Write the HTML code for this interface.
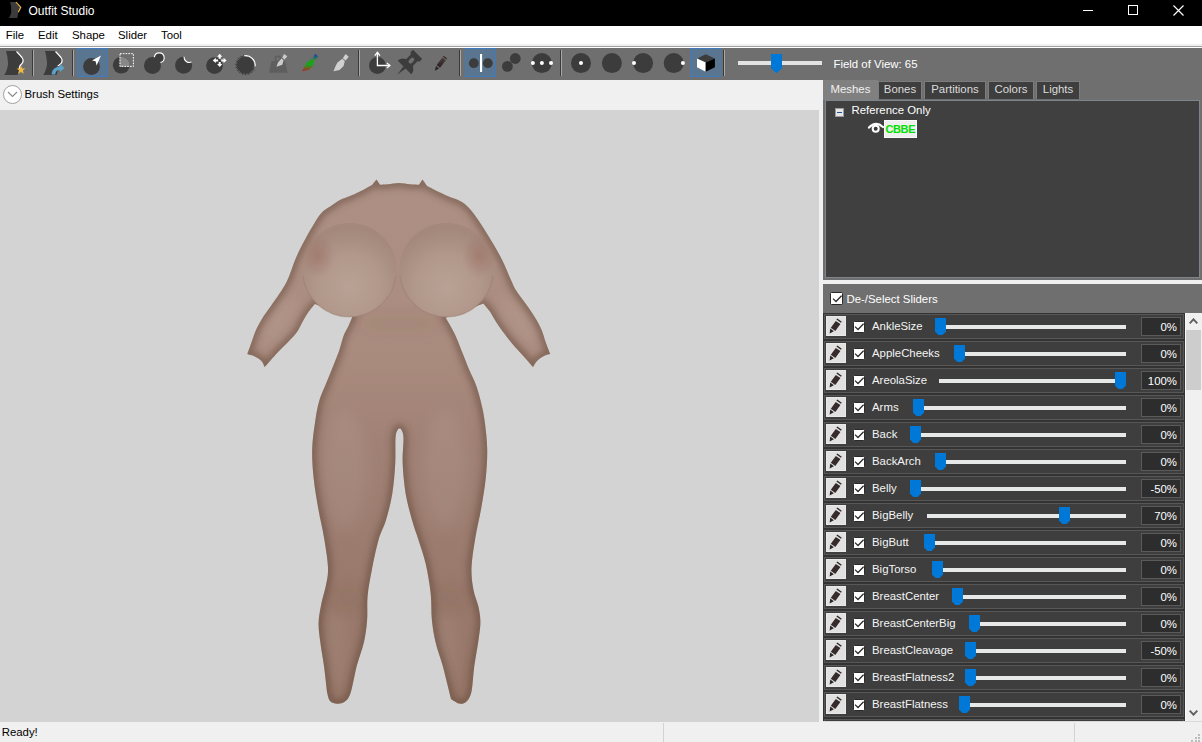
<!DOCTYPE html><html><head><meta charset="utf-8"><style>
*{margin:0;padding:0;box-sizing:border-box}
html,body{width:1202px;height:742px;overflow:hidden;background:#f0f0f0;font-family:"Liberation Sans",sans-serif;font-size:11.4px;color:#000}
.a{position:absolute}
#title{left:0;top:0;width:1202px;height:26px;background:#000;color:#fff}
#menu{left:0;top:26px;width:1202px;height:20px;background:#fff}
#menu span{position:absolute;top:3.2px}
#tb{left:0;top:48px;width:1202px;height:32px;background:#6f6f6f}
.sep{position:absolute;top:50px;width:2px;height:27px;background:#4a4a4a;border-right:1px solid #8a8a8a}
.sel{position:absolute;top:48px;height:29px;background:#5a7590;border:1px solid #3f7bbd}
#brush{left:0;top:80px;width:819px;height:30px;background:#f0f0f0}
#view{left:0;top:110px;width:819px;height:612px;background:#d3d3d3;overflow:hidden}
#rp{left:823px;top:80px;width:379px;height:200px;background:#6f6f6f}
.tab{position:absolute;top:81px;height:18px;background:#3e3e3e;border:1px solid #7c7c7c;border-bottom:none;color:#dcdcdc;padding-top:1.4px;text-align:center}
#tree{left:825px;top:100px;width:375px;height:178px;background:#404040;border:1px solid #7d848c}
#hdr{left:823px;top:284px;width:379px;height:29px;background:#6f6f6f;color:#fff}
#list{left:823px;top:313px;width:362px;height:408px;background:#333;overflow:hidden}
.row{position:absolute;left:1px;width:360px;height:25px;background:#3e3e3e;border:1px solid #575757}
.pen{position:absolute;left:1px;top:1px;width:20px;height:20px;background:#e1e1e1;border:1px solid #e9e9e9}
.cb{position:absolute;width:12px;height:12px;background:#fff;border:1px solid #2a2a2a;border-radius:1.5px}
.lbl{position:absolute;top:4.6px;color:#f4f4f4;white-space:nowrap}
.trk{position:absolute;top:10px;height:4px;background:#e7e8e8}
.thm{position:absolute;top:3px;width:11px;height:17px}
.val{position:absolute;left:316px;top:2px;width:40px;height:19px;background:#2d2d2d;border:1px solid #5a5a5a;color:#fff;text-align:right;padding-right:3px;padding-top:2.7px}
#sb{left:1185px;top:313px;width:17px;height:408px;background:#f0f0f0}
#status{left:0;top:722px;width:1202px;height:20px;background:#f0f0f0}
</style></head><body>
<div id="title" class="a">
<svg class="a" style="left:0;top:0" width="26" height="26" viewBox="0 0 26 26"><path d="M10.2 2 H16 L20.8 7.3 L18.3 12.3 L17.3 18 H9 Q10.6 15.6 11.2 12.5 Q11.5 7 10.2 2Z" fill="#3c3c3c"/><path d="M16 2 L20.8 7.3 L18.3 12.3" fill="none" stroke="#f0b840" stroke-width="1.1"/></svg>
<span class="a" style="left:28.5px;top:4.1px;font-size:12px">Outfit Studio</span>
<div class="a" style="left:1083px;top:10px;width:10px;height:1px;background:#fff"></div>
<div class="a" style="left:1128px;top:5px;width:10px;height:10px;border:1px solid #fff"></div>
<svg class="a" style="left:1173px;top:5px" width="11" height="11" viewBox="0 0 11 11"><path d="M0.5 0.5 L10.5 10.5 M10.5 0.5 L0.5 10.5" stroke="#fff" stroke-width="1.15"/></svg>
</div>
<div id="menu" class="a">
<span style="left:5.7px">File</span>
<span style="left:38px">Edit</span>
<span style="left:72px">Shape</span>
<span style="left:118px">Slider</span>
<span style="left:161px">Tool</span>
</div>
<div class="a" style="left:0;top:44px;width:1202px;height:2px;background:#f0f0f0"></div>
<div class="a" style="left:0;top:46px;width:1202px;height:1px;background:#a0a0a0"></div>
<div class="a" style="left:0;top:47px;width:1202px;height:1px;background:#fff"></div>
<div id="tb" class="a"></div>
<div class="sel" style="left:77px;width:31px"></div>
<div class="sel" style="left:465px;width:31px"></div>
<div class="sel" style="left:690px;width:31px"></div>
<svg class="a" style="left:0;top:0" width="1202" height="80" viewBox="0 0 1202 80">
<defs>
<linearGradient id="cg" x1="0" y1="0" x2="0" y2="1"><stop offset="0" stop-color="#2030c0"/><stop offset="0.4" stop-color="#20a020"/><stop offset="0.65" stop-color="#20a020"/><stop offset="1" stop-color="#c02020"/></linearGradient>
<linearGradient id="pg" x1="0" y1="0" x2="0" y2="1"><stop offset="0" stop-color="#4a4040"/><stop offset="1" stop-color="#2a1c1c"/></linearGradient>
</defs>
<!-- separators -->
<g fill="#3a3a3a"><rect x="32" y="50" width="1" height="26"/><rect x="72" y="50" width="1" height="26"/><rect x="358" y="50" width="1" height="26"/><rect x="459" y="50" width="1" height="26"/><rect x="560" y="50" width="1" height="26"/><rect x="723" y="50" width="1" height="26"/></g>
<g fill="#a8a8a8"><rect x="33" y="50" width="1" height="26"/><rect x="73" y="50" width="1" height="26"/><rect x="359" y="50" width="1" height="26"/><rect x="460" y="50" width="1" height="26"/><rect x="561" y="50" width="1" height="26"/><rect x="724" y="50" width="1" height="26"/></g>
<!-- icon1 silhouette -->
<path d="M6 51 H16.5 Q19 54 22 57.5 Q24.5 61 21.5 64 Q19 66 19.5 69 L17.5 75 H4.3 Q8.5 68 8 62 Q7.6 56 6 51Z" fill="#3c3c3c"/>
<path d="M16.5 51.5 Q19 54 22 57.5 Q24.5 61 21.5 64 Q19 66 19.5 69" fill="none" stroke="#fff" stroke-width="1.2"/>
<path d="M21 65.4 L22.2 68.5 L25.4 68.6 L22.9 70.6 L23.8 73.8 L21 72 L18.2 73.8 L19.1 70.6 L16.6 68.6 L19.8 68.5Z" fill="#f0b840"/>
<!-- icon2 -->
<path d="M45 51 H55.5 Q58 54 61 57.5 Q63.5 61 60.5 64 Q58 66 58.5 69 L56.5 75 H43.3 Q47.5 68 47 62 Q46.6 56 45 51Z" fill="#3c3c3c"/>
<path d="M55.5 51.5 Q58 54 61 57.5 Q63.5 61 60.5 64 Q58 66 57.5 66" fill="none" stroke="#fff" stroke-width="1.2"/>
<path d="M51.5 74.5 Q52 67 60 66.5 L60 64 L64.6 68 L60 72 L60 69.7 Q55.5 70 55.3 74.5Z" fill="#5ba3c9"/>
<!-- selected: sphere + arrow -->
<circle cx="91.5" cy="66.5" r="8.4" fill="#3c3c3c"/>
<path d="M101 55.6 L92 60.4 L95.6 61.2 L96.6 65.6Z" fill="#fff"/>
<!-- select -->
<circle cx="121.3" cy="65.2" r="8.4" fill="#3c3c3c"/>
<path d="M119.6 57 A8.4 8.4 0 0 1 129.7 65.2 L129.7 66.8 L119.6 66.8Z" fill="#888"/>
<rect x="120" y="53.6" width="13.4" height="12.8" fill="none" stroke="#fff" stroke-width="1" stroke-dasharray="1.6 1.2"/>
<!-- inflate -->
<circle cx="159.3" cy="57.7" r="4.9" fill="#3c3c3c"/>
<circle cx="152.5" cy="65.6" r="8.5" fill="#3c3c3c"/>
<path d="M154.4 57.3 A4.9 4.9 0 1 1 160.4 62.5" fill="none" stroke="#fff" stroke-width="1.1"/>
<!-- deflate -->
<circle cx="183.6" cy="65.2" r="8.5" fill="#3c3c3c"/>
<circle cx="189.5" cy="57" r="5.5" fill="#6f6f6f"/>
<path d="M184 56.7 A5.5 5.5 0 0 0 191.5 62.1" fill="none" stroke="#fff" stroke-width="1.1"/>
<!-- move -->
<circle cx="214.5" cy="65.6" r="8.4" fill="#3c3c3c"/>
<g fill="#fff"><path d="M219.7 53.8 L222.29999999999998 56.8 H220.7 V58.8 H218.7 V56.8 H217.1Z"/><path d="M219.7 67.0 L222.29999999999998 64.0 H220.7 V62.0 H218.7 V64.0 H217.1Z"/><path d="M212.79999999999998 60.4 L215.79999999999998 63.0 V61.4 H218.1 V59.4 H215.79999999999998 V57.8Z"/><path d="M226.6 60.4 L223.6 63.0 V61.4 H221.29999999999998 V59.4 H223.6 V57.8Z"/></g>
<!-- smooth spiky -->
<circle cx="245.5" cy="65" r="8.6" fill="#3c3c3c"/>
<path d="M244.2 57.6 L243.7 54.9 M243.0 57.9 L242.3 56.0 M241.9 58.4 L240.5 56.0 M240.8 59.1 L239.5 57.5 M239.9 60.0 L237.8 58.1 M239.2 61.0 L237.4 59.8 M238.6 62.1 L236.0 61.0 M238.2 63.2 L236.2 62.8 M238.0 64.5 L235.2 64.3 M238.0 65.7 L235.9 65.9 M238.3 66.9 L235.6 67.7 M238.7 68.1 L236.8 69.0 M239.3 69.2 L237.0 70.8 M240.1 70.2 L238.5 71.6 M241.0 71.0 L239.3 73.2 M242.0 71.7 L241.1 73.5 M243.2 72.1 L242.3 74.8 M244.4 72.4 L244.1 74.5 M245.6 72.5 L245.7 75.3 M246.9 72.4 L247.2 74.4 M248.1 72.0 L249.0 74.7 M249.2 71.5 L250.2 73.4 M250.2 70.8 L252.0 73.0 M251.1 70.0 L252.7 71.4 M251.9 69.0 L254.2 70.5 M252.4 67.9 L254.4 68.7" stroke="#3c3c3c" stroke-width="1"/>
<path d="M244.2 55.8 A9.6 9.6 0 0 1 255.2 66.2" fill="none" stroke="#fff" stroke-width="1.1"/>
<!-- weight (disabled) -->
<path d="M271.5 61 H285 L287.5 72.7 H269Z" fill="#5e5e5e"/>
<circle cx="277.8" cy="58.8" r="2.6" fill="none" stroke="#5e5e5e" stroke-width="1.4"/>
<path d="M284 54 L287.3 56.3 L284.6 59.6 L282.3 57.8Z" fill="#cdcdcd"/>
<path d="M281.5 58.5 L283.5 60.2 L282.4 64.8 L276.4 66.8 L278 62.5Z" fill="#cdcdcd"/>
<!-- color brush -->
<path d="M315.2 53.8 L318.2 56.4 L315.5 60 L312.6 58Z M312 58.5 L314.5 60.6 L313.3 65.8 L309 69.8 L302 71.2 L304.5 66.5 L306.5 62.6Z" fill="url(#cg)"/>
<!-- gray brush -->
<path d="M345.6 54 L348.7 56.8 L345.7 60.5 L342.8 58.3Z M342.2 58.8 L344.8 61 L343.6 66 L339.5 70 L333.5 71.2 L335.4 66.5 L337.3 62.8Z" fill="#d0d0d0"/>
<!-- transform -->
<circle cx="377.4" cy="65.5" r="8.4" fill="#3c3c3c"/>
<path d="M377.4 52.8 V65.5 H389.5" fill="none" stroke="#fff" stroke-width="1.3"/>
<path d="M374.8 55.6 L377.4 52.3 L380 55.6 M386.8 62.9 L390 65.5 L386.8 68.1" fill="none" stroke="#fff" stroke-width="1.2"/>
<!-- pin -->
<g transform="translate(407 65) rotate(45)">
<path d="M-6.5 -15 H6.5 V-11.5 L4.8 -10 V-3.5 Q9.5 -1 9.5 3.5 H-9.5 Q-9.5 -1 -4.8 -3.5 V-10 L-6.5 -11.5Z" fill="#3c3c3c"/>
<path d="M-1.6 3.4 L0 13.5 L1.6 3.4Z" fill="#3c3c3c"/>
<rect x="-2" y="-9.5" width="4" height="6.5" rx="2" fill="#6f6f6f"/>
</g>
<!-- pencil -->
<path d="M443.8 55.7 L447.2 58.4 L446.3 59.5 L442.9 56.8Z" fill="#3a2828"/>
<path d="M442.4 57.6 L445.8 60.3 L440 67.8 L436.6 65.1Z" fill="url(#pg)"/>
<path d="M436 66 L439 68.4 L434.8 70.8Z" fill="#2a2020"/>
<!-- mirror -->
<circle cx="473.8" cy="63.2" r="4.9" fill="#3c3c3c"/>
<circle cx="487.8" cy="63.2" r="4.9" fill="#3c3c3c"/>
<rect x="480" y="54" width="2.1" height="18" fill="#fff"/>
<!-- two circles -->
<circle cx="515.3" cy="58.5" r="5.4" fill="#3c3c3c"/>
<circle cx="507.4" cy="66.4" r="5.4" fill="#3c3c3c"/>
<!-- 3 dots -->
<circle cx="541.9" cy="63.1" r="10" fill="#3c3c3c"/>
<g fill="#fff"><circle cx="532.9" cy="63.1" r="2"/><circle cx="541.9" cy="63.1" r="2"/><circle cx="551" cy="63.1" r="2"/></g>
<circle cx="581" cy="63.1" r="10" fill="#3c3c3c"/><circle cx="581" cy="63.1" r="2" fill="#fff"/>
<circle cx="611.9" cy="63.1" r="10" fill="#3c3c3c"/>
<circle cx="643.1" cy="63.1" r="10" fill="#3c3c3c"/><circle cx="634" cy="63.1" r="2" fill="#fff"/>
<circle cx="673.7" cy="63.1" r="10" fill="#3c3c3c"/><circle cx="682.9" cy="63.1" r="2" fill="#fff"/>
<!-- cube -->
<path d="M705.7 54.3 L714.9 58.5 L705.7 62.6 L697 58.5Z" fill="#3c3c3c"/>
<path d="M697 58.5 L705.7 62.6 V71.8 L697 67.2Z" fill="#fff"/>
<path d="M714.9 58.5 L705.7 62.6 V71.8 L714.9 67.2Z" fill="#000"/>
<!-- fov slider -->
<rect x="738" y="61" width="84" height="4" fill="#e3e3e3"/>
<path d="M771 54 H782 V68.3 L776.5 73.2 L771 68.3Z" fill="#0078d7"/>
</svg>
<span class="a" style="left:833.5px;top:57.6px;color:#fff">Field of View: 65</span>

<div id="brush" class="a">
<div class="a" style="left:3px;top:5px;width:19px;height:19px;border:1px solid #a0a0a0;border-radius:50%;background:#fff"></div>
<svg class="a" style="left:7px;top:11px" width="11" height="7" viewBox="0 0 11 7"><path d="M1 1 L5.5 5.5 L10 1" fill="none" stroke="#8a8a8a" stroke-width="1.1"/></svg>
<span class="a" style="left:24.5px;top:8.3px">Brush Settings</span>
</div>
<div id="view" class="a"><svg class="a" style="left:0;top:0" width="819" height="612" viewBox="0 110 819 612">
<defs>
<linearGradient id="skin" x1="0" y1="180" x2="0" y2="705" gradientUnits="userSpaceOnUse">
<stop offset="0" stop-color="#ad9084"/>
<stop offset="0.3" stop-color="#ab8d80"/>
<stop offset="0.5" stop-color="#a18175"/>
<stop offset="0.75" stop-color="#9a7a6d"/>
<stop offset="1" stop-color="#967667"/>
</linearGradient>
<radialGradient id="br" cx="0.5" cy="0.68" r="0.62">
<stop offset="0" stop-color="#b9a195"/>
<stop offset="0.55" stop-color="#b1988b"/>
<stop offset="1" stop-color="#a3887b"/>
</radialGradient>
<radialGradient id="ar" cx="0.5" cy="0.5" r="0.5">
<stop offset="0" stop-color="#9a6a5e" stop-opacity="0.5"/>
<stop offset="1" stop-color="#9a6a5e" stop-opacity="0"/>
</radialGradient>
<clipPath id="bc"><path d="M372.0 185.0 L376.5 179.5 L380.0 184.8 C381.3 184.7 384.8 184.6 388.0 184.3 C391.2 184.0 395.3 183.0 399.0 183.0 C402.7 183.0 406.7 184.0 410.0 184.3 C413.3 184.6 417.5 184.7 419.0 184.8 L422.5 179.5 L427.0 186.0 C429.2 187.1 436.2 190.7 440.0 192.5 C443.8 194.3 446.7 195.6 450.0 197.0 C453.3 198.4 456.8 199.2 460.0 201.0 C463.2 202.8 465.8 204.5 469.0 208.0 C472.2 211.5 475.6 216.2 479.4 221.8 C483.2 227.4 487.8 234.8 491.6 241.3 C495.5 247.8 499.3 254.2 502.5 260.7 C505.7 267.2 508.8 275.2 511.0 280.1 C513.2 285.0 513.6 286.4 515.8 290.0 C518.0 293.6 521.3 297.6 524.4 301.9 C527.5 306.2 531.2 311.2 534.1 315.9 C537.0 320.6 539.7 325.5 541.6 329.9 C543.5 334.3 544.3 338.5 545.8 342.5 C547.2 346.5 549.5 352.2 550.3 354.1 C549.1 354.5 545.2 355.2 543.0 356.4 C540.8 357.5 538.7 359.2 537.0 361.0 C535.3 362.8 533.7 366.1 533.0 367.1 C531.2 365.0 525.6 358.6 522.2 354.7 C518.8 350.8 515.5 347.5 512.5 343.9 C509.4 340.3 506.6 336.7 503.9 333.1 C501.2 329.5 498.6 325.9 496.3 322.3 C494.0 318.7 492.0 314.7 489.9 311.6 C487.8 308.5 484.5 304.9 483.4 303.5 L445.7 317.8 C446.6 319.4 449.6 324.3 451.3 327.5 C453.1 330.7 454.3 332.9 456.2 337.2 C458.1 341.5 460.5 348.0 462.7 353.4 C464.9 358.8 467.0 364.5 469.1 369.6 C471.2 374.7 473.7 379.0 475.6 384.1 C477.5 389.2 479.0 394.3 480.5 400.3 C482.0 406.3 483.4 411.9 484.5 420.0 C485.6 428.1 487.0 439.2 487.2 449.0 C487.4 458.8 486.7 468.7 485.7 478.6 C484.7 488.5 482.9 498.3 481.2 508.2 C479.5 518.1 476.9 528.0 475.3 537.9 C473.7 547.8 471.8 558.8 471.5 567.5 C471.2 576.2 472.3 583.4 473.5 590.0 C474.7 596.6 477.4 601.7 478.5 607.0 C479.6 612.3 480.4 616.5 480.4 622.0 C480.4 627.5 479.5 632.6 478.5 640.0 C477.5 647.4 475.5 657.4 474.3 666.1 C473.1 674.8 472.8 686.0 471.4 692.0 C470.0 698.0 468.1 700.1 466.0 702.0 C463.9 703.9 461.5 704.0 459.0 703.5 C456.5 703.0 452.3 699.8 451.0 699.0 C449.6 693.5 445.4 675.6 442.8 666.1 C440.2 656.6 437.3 649.6 435.5 641.9 C433.7 634.2 432.7 628.1 431.9 620.0 C431.1 611.9 431.7 602.7 430.7 593.4 C429.7 584.1 427.8 573.2 425.8 564.3 C423.8 555.4 420.8 547.4 418.5 540.0 C416.2 532.6 414.1 527.8 412.0 520.0 C409.9 512.2 407.2 502.8 405.6 493.4 C404.1 484.0 403.1 473.0 402.7 463.8 C402.3 454.6 403.7 443.6 403.5 438.0 C403.3 432.4 402.2 431.6 401.5 430.0 C400.8 428.4 400.2 428.5 399.5 428.5 C398.8 428.5 398.2 428.4 397.5 430.0 C396.8 431.6 395.9 432.4 395.5 438.0 C395.1 443.6 395.7 454.6 395.2 463.8 C394.7 473.0 393.8 484.0 392.3 493.4 C390.8 502.8 388.3 512.2 386.0 520.0 C383.7 527.8 380.8 531.8 378.5 540.0 C376.2 548.2 373.8 559.8 372.0 569.1 C370.2 578.4 368.4 587.3 367.6 595.8 C366.8 604.3 367.7 612.3 367.1 620.0 C366.5 627.7 365.7 634.2 364.0 641.9 C362.3 649.6 358.9 657.6 356.7 666.1 C354.5 674.6 352.6 686.9 350.6 692.8 C348.7 698.7 347.2 699.7 345.0 701.5 C342.8 703.3 339.8 703.8 337.3 703.7 C334.8 703.6 331.7 703.0 330.0 701.0 C328.3 699.0 327.5 693.5 327.0 692.0 C326.5 687.7 325.1 674.5 324.0 666.1 C322.9 657.8 321.2 649.2 320.3 641.9 C319.4 634.6 318.4 629.0 318.6 622.5 C318.8 616.0 320.3 609.2 321.5 603.0 C322.7 596.8 324.9 590.9 326.0 585.0 C327.1 579.1 328.3 575.4 328.0 567.5 C327.7 559.6 325.7 547.8 324.1 537.9 C322.5 528.0 319.9 518.1 318.2 508.2 C316.5 498.3 314.7 488.5 313.7 478.6 C312.7 468.7 311.9 458.8 312.2 449.0 C312.5 439.2 314.2 428.1 315.4 420.0 C316.6 411.9 317.6 406.3 319.4 400.3 C321.1 394.3 323.7 389.5 325.9 384.1 C328.1 378.7 330.2 373.4 332.4 368.0 C334.5 362.6 336.9 357.2 338.8 351.8 C340.7 346.4 342.1 339.9 343.7 335.6 C345.3 331.3 347.0 329.1 348.5 325.9 C350.0 322.7 351.9 317.8 352.6 316.2 L314.8 304.0 C313.8 305.3 310.7 308.9 308.8 311.6 C306.9 314.3 305.4 316.8 303.4 320.2 C301.4 323.6 299.5 328.4 297.0 332.0 C294.5 335.6 291.5 338.4 288.3 341.8 C285.1 345.2 281.6 348.3 277.6 352.5 C273.7 356.7 266.8 364.7 264.6 367.1 C264.1 366.1 263.1 362.8 261.5 361.0 C259.9 359.2 257.2 357.6 254.8 356.5 C252.4 355.4 248.6 354.5 247.3 354.1 C248.1 352.0 250.4 345.5 251.8 341.5 C253.2 337.5 254.2 333.8 256.0 329.9 C257.8 326.0 260.2 321.8 262.5 318.0 C264.8 314.2 266.8 312.0 270.0 307.3 C273.2 302.6 278.8 294.9 281.9 290.0 C285.0 285.1 286.2 283.0 288.5 277.7 C290.8 272.4 293.0 264.8 295.8 258.3 C298.6 251.8 301.4 246.1 305.5 238.8 C309.6 231.5 315.9 220.1 320.1 214.6 C324.4 209.1 327.7 208.4 331.0 206.0 C334.3 203.6 336.8 201.7 340.0 200.0 C343.2 198.3 346.7 197.4 350.0 196.0 C353.3 194.6 356.3 193.3 360.0 191.5 C363.7 189.7 370.0 186.1 372.0 185.0Z"/></clipPath>
<filter id="bl" x="-20%" y="-20%" width="140%" height="140%"><feGaussianBlur stdDeviation="3"/></filter>
<filter id="bl2" x="-50%" y="-50%" width="200%" height="200%"><feGaussianBlur stdDeviation="8"/></filter>
</defs>
<path d="M372.0 185.0 L376.5 179.5 L380.0 184.8 C381.3 184.7 384.8 184.6 388.0 184.3 C391.2 184.0 395.3 183.0 399.0 183.0 C402.7 183.0 406.7 184.0 410.0 184.3 C413.3 184.6 417.5 184.7 419.0 184.8 L422.5 179.5 L427.0 186.0 C429.2 187.1 436.2 190.7 440.0 192.5 C443.8 194.3 446.7 195.6 450.0 197.0 C453.3 198.4 456.8 199.2 460.0 201.0 C463.2 202.8 465.8 204.5 469.0 208.0 C472.2 211.5 475.6 216.2 479.4 221.8 C483.2 227.4 487.8 234.8 491.6 241.3 C495.5 247.8 499.3 254.2 502.5 260.7 C505.7 267.2 508.8 275.2 511.0 280.1 C513.2 285.0 513.6 286.4 515.8 290.0 C518.0 293.6 521.3 297.6 524.4 301.9 C527.5 306.2 531.2 311.2 534.1 315.9 C537.0 320.6 539.7 325.5 541.6 329.9 C543.5 334.3 544.3 338.5 545.8 342.5 C547.2 346.5 549.5 352.2 550.3 354.1 C549.1 354.5 545.2 355.2 543.0 356.4 C540.8 357.5 538.7 359.2 537.0 361.0 C535.3 362.8 533.7 366.1 533.0 367.1 C531.2 365.0 525.6 358.6 522.2 354.7 C518.8 350.8 515.5 347.5 512.5 343.9 C509.4 340.3 506.6 336.7 503.9 333.1 C501.2 329.5 498.6 325.9 496.3 322.3 C494.0 318.7 492.0 314.7 489.9 311.6 C487.8 308.5 484.5 304.9 483.4 303.5 L445.7 317.8 C446.6 319.4 449.6 324.3 451.3 327.5 C453.1 330.7 454.3 332.9 456.2 337.2 C458.1 341.5 460.5 348.0 462.7 353.4 C464.9 358.8 467.0 364.5 469.1 369.6 C471.2 374.7 473.7 379.0 475.6 384.1 C477.5 389.2 479.0 394.3 480.5 400.3 C482.0 406.3 483.4 411.9 484.5 420.0 C485.6 428.1 487.0 439.2 487.2 449.0 C487.4 458.8 486.7 468.7 485.7 478.6 C484.7 488.5 482.9 498.3 481.2 508.2 C479.5 518.1 476.9 528.0 475.3 537.9 C473.7 547.8 471.8 558.8 471.5 567.5 C471.2 576.2 472.3 583.4 473.5 590.0 C474.7 596.6 477.4 601.7 478.5 607.0 C479.6 612.3 480.4 616.5 480.4 622.0 C480.4 627.5 479.5 632.6 478.5 640.0 C477.5 647.4 475.5 657.4 474.3 666.1 C473.1 674.8 472.8 686.0 471.4 692.0 C470.0 698.0 468.1 700.1 466.0 702.0 C463.9 703.9 461.5 704.0 459.0 703.5 C456.5 703.0 452.3 699.8 451.0 699.0 C449.6 693.5 445.4 675.6 442.8 666.1 C440.2 656.6 437.3 649.6 435.5 641.9 C433.7 634.2 432.7 628.1 431.9 620.0 C431.1 611.9 431.7 602.7 430.7 593.4 C429.7 584.1 427.8 573.2 425.8 564.3 C423.8 555.4 420.8 547.4 418.5 540.0 C416.2 532.6 414.1 527.8 412.0 520.0 C409.9 512.2 407.2 502.8 405.6 493.4 C404.1 484.0 403.1 473.0 402.7 463.8 C402.3 454.6 403.7 443.6 403.5 438.0 C403.3 432.4 402.2 431.6 401.5 430.0 C400.8 428.4 400.2 428.5 399.5 428.5 C398.8 428.5 398.2 428.4 397.5 430.0 C396.8 431.6 395.9 432.4 395.5 438.0 C395.1 443.6 395.7 454.6 395.2 463.8 C394.7 473.0 393.8 484.0 392.3 493.4 C390.8 502.8 388.3 512.2 386.0 520.0 C383.7 527.8 380.8 531.8 378.5 540.0 C376.2 548.2 373.8 559.8 372.0 569.1 C370.2 578.4 368.4 587.3 367.6 595.8 C366.8 604.3 367.7 612.3 367.1 620.0 C366.5 627.7 365.7 634.2 364.0 641.9 C362.3 649.6 358.9 657.6 356.7 666.1 C354.5 674.6 352.6 686.9 350.6 692.8 C348.7 698.7 347.2 699.7 345.0 701.5 C342.8 703.3 339.8 703.8 337.3 703.7 C334.8 703.6 331.7 703.0 330.0 701.0 C328.3 699.0 327.5 693.5 327.0 692.0 C326.5 687.7 325.1 674.5 324.0 666.1 C322.9 657.8 321.2 649.2 320.3 641.9 C319.4 634.6 318.4 629.0 318.6 622.5 C318.8 616.0 320.3 609.2 321.5 603.0 C322.7 596.8 324.9 590.9 326.0 585.0 C327.1 579.1 328.3 575.4 328.0 567.5 C327.7 559.6 325.7 547.8 324.1 537.9 C322.5 528.0 319.9 518.1 318.2 508.2 C316.5 498.3 314.7 488.5 313.7 478.6 C312.7 468.7 311.9 458.8 312.2 449.0 C312.5 439.2 314.2 428.1 315.4 420.0 C316.6 411.9 317.6 406.3 319.4 400.3 C321.1 394.3 323.7 389.5 325.9 384.1 C328.1 378.7 330.2 373.4 332.4 368.0 C334.5 362.6 336.9 357.2 338.8 351.8 C340.7 346.4 342.1 339.9 343.7 335.6 C345.3 331.3 347.0 329.1 348.5 325.9 C350.0 322.7 351.9 317.8 352.6 316.2 L314.8 304.0 C313.8 305.3 310.7 308.9 308.8 311.6 C306.9 314.3 305.4 316.8 303.4 320.2 C301.4 323.6 299.5 328.4 297.0 332.0 C294.5 335.6 291.5 338.4 288.3 341.8 C285.1 345.2 281.6 348.3 277.6 352.5 C273.7 356.7 266.8 364.7 264.6 367.1 C264.1 366.1 263.1 362.8 261.5 361.0 C259.9 359.2 257.2 357.6 254.8 356.5 C252.4 355.4 248.6 354.5 247.3 354.1 C248.1 352.0 250.4 345.5 251.8 341.5 C253.2 337.5 254.2 333.8 256.0 329.9 C257.8 326.0 260.2 321.8 262.5 318.0 C264.8 314.2 266.8 312.0 270.0 307.3 C273.2 302.6 278.8 294.9 281.9 290.0 C285.0 285.1 286.2 283.0 288.5 277.7 C290.8 272.4 293.0 264.8 295.8 258.3 C298.6 251.8 301.4 246.1 305.5 238.8 C309.6 231.5 315.9 220.1 320.1 214.6 C324.4 209.1 327.7 208.4 331.0 206.0 C334.3 203.6 336.8 201.7 340.0 200.0 C343.2 198.3 346.7 197.4 350.0 196.0 C353.3 194.6 356.3 193.3 360.0 191.5 C363.7 189.7 370.0 186.1 372.0 185.0Z" fill="url(#skin)"/>
<g clip-path="url(#bc)">
<g filter="url(#bl2)" fill="#fff" fill-opacity="0.07">
<ellipse cx="345" cy="470" rx="22" ry="60"/>
<ellipse cx="445" cy="470" rx="22" ry="60"/>

<ellipse cx="336" cy="650" rx="9" ry="40"/>
<ellipse cx="446" cy="650" rx="9" ry="40"/>
<ellipse cx="278" cy="320" rx="10" ry="30" transform="rotate(35 278 320)"/>
<ellipse cx="520" cy="320" rx="10" ry="30" transform="rotate(-35 520 320)"/>
</g>
<g filter="url(#bl2)" fill="#5a4036" fill-opacity="0.12">
<ellipse cx="348" cy="598" rx="16" ry="8"/>
<ellipse cx="450" cy="598" rx="16" ry="8"/>
<ellipse cx="399" cy="324" rx="45" ry="6"/>
</g>
<path d="M372.0 185.0 L376.5 179.5 L380.0 184.8 C381.3 184.7 384.8 184.6 388.0 184.3 C391.2 184.0 395.3 183.0 399.0 183.0 C402.7 183.0 406.7 184.0 410.0 184.3 C413.3 184.6 417.5 184.7 419.0 184.8 L422.5 179.5 L427.0 186.0 C429.2 187.1 436.2 190.7 440.0 192.5 C443.8 194.3 446.7 195.6 450.0 197.0 C453.3 198.4 456.8 199.2 460.0 201.0 C463.2 202.8 465.8 204.5 469.0 208.0 C472.2 211.5 475.6 216.2 479.4 221.8 C483.2 227.4 487.8 234.8 491.6 241.3 C495.5 247.8 499.3 254.2 502.5 260.7 C505.7 267.2 508.8 275.2 511.0 280.1 C513.2 285.0 513.6 286.4 515.8 290.0 C518.0 293.6 521.3 297.6 524.4 301.9 C527.5 306.2 531.2 311.2 534.1 315.9 C537.0 320.6 539.7 325.5 541.6 329.9 C543.5 334.3 544.3 338.5 545.8 342.5 C547.2 346.5 549.5 352.2 550.3 354.1 C549.1 354.5 545.2 355.2 543.0 356.4 C540.8 357.5 538.7 359.2 537.0 361.0 C535.3 362.8 533.7 366.1 533.0 367.1 C531.2 365.0 525.6 358.6 522.2 354.7 C518.8 350.8 515.5 347.5 512.5 343.9 C509.4 340.3 506.6 336.7 503.9 333.1 C501.2 329.5 498.6 325.9 496.3 322.3 C494.0 318.7 492.0 314.7 489.9 311.6 C487.8 308.5 484.5 304.9 483.4 303.5 L445.7 317.8 C446.6 319.4 449.6 324.3 451.3 327.5 C453.1 330.7 454.3 332.9 456.2 337.2 C458.1 341.5 460.5 348.0 462.7 353.4 C464.9 358.8 467.0 364.5 469.1 369.6 C471.2 374.7 473.7 379.0 475.6 384.1 C477.5 389.2 479.0 394.3 480.5 400.3 C482.0 406.3 483.4 411.9 484.5 420.0 C485.6 428.1 487.0 439.2 487.2 449.0 C487.4 458.8 486.7 468.7 485.7 478.6 C484.7 488.5 482.9 498.3 481.2 508.2 C479.5 518.1 476.9 528.0 475.3 537.9 C473.7 547.8 471.8 558.8 471.5 567.5 C471.2 576.2 472.3 583.4 473.5 590.0 C474.7 596.6 477.4 601.7 478.5 607.0 C479.6 612.3 480.4 616.5 480.4 622.0 C480.4 627.5 479.5 632.6 478.5 640.0 C477.5 647.4 475.5 657.4 474.3 666.1 C473.1 674.8 472.8 686.0 471.4 692.0 C470.0 698.0 468.1 700.1 466.0 702.0 C463.9 703.9 461.5 704.0 459.0 703.5 C456.5 703.0 452.3 699.8 451.0 699.0 C449.6 693.5 445.4 675.6 442.8 666.1 C440.2 656.6 437.3 649.6 435.5 641.9 C433.7 634.2 432.7 628.1 431.9 620.0 C431.1 611.9 431.7 602.7 430.7 593.4 C429.7 584.1 427.8 573.2 425.8 564.3 C423.8 555.4 420.8 547.4 418.5 540.0 C416.2 532.6 414.1 527.8 412.0 520.0 C409.9 512.2 407.2 502.8 405.6 493.4 C404.1 484.0 403.1 473.0 402.7 463.8 C402.3 454.6 403.7 443.6 403.5 438.0 C403.3 432.4 402.2 431.6 401.5 430.0 C400.8 428.4 400.2 428.5 399.5 428.5 C398.8 428.5 398.2 428.4 397.5 430.0 C396.8 431.6 395.9 432.4 395.5 438.0 C395.1 443.6 395.7 454.6 395.2 463.8 C394.7 473.0 393.8 484.0 392.3 493.4 C390.8 502.8 388.3 512.2 386.0 520.0 C383.7 527.8 380.8 531.8 378.5 540.0 C376.2 548.2 373.8 559.8 372.0 569.1 C370.2 578.4 368.4 587.3 367.6 595.8 C366.8 604.3 367.7 612.3 367.1 620.0 C366.5 627.7 365.7 634.2 364.0 641.9 C362.3 649.6 358.9 657.6 356.7 666.1 C354.5 674.6 352.6 686.9 350.6 692.8 C348.7 698.7 347.2 699.7 345.0 701.5 C342.8 703.3 339.8 703.8 337.3 703.7 C334.8 703.6 331.7 703.0 330.0 701.0 C328.3 699.0 327.5 693.5 327.0 692.0 C326.5 687.7 325.1 674.5 324.0 666.1 C322.9 657.8 321.2 649.2 320.3 641.9 C319.4 634.6 318.4 629.0 318.6 622.5 C318.8 616.0 320.3 609.2 321.5 603.0 C322.7 596.8 324.9 590.9 326.0 585.0 C327.1 579.1 328.3 575.4 328.0 567.5 C327.7 559.6 325.7 547.8 324.1 537.9 C322.5 528.0 319.9 518.1 318.2 508.2 C316.5 498.3 314.7 488.5 313.7 478.6 C312.7 468.7 311.9 458.8 312.2 449.0 C312.5 439.2 314.2 428.1 315.4 420.0 C316.6 411.9 317.6 406.3 319.4 400.3 C321.1 394.3 323.7 389.5 325.9 384.1 C328.1 378.7 330.2 373.4 332.4 368.0 C334.5 362.6 336.9 357.2 338.8 351.8 C340.7 346.4 342.1 339.9 343.7 335.6 C345.3 331.3 347.0 329.1 348.5 325.9 C350.0 322.7 351.9 317.8 352.6 316.2 L314.8 304.0 C313.8 305.3 310.7 308.9 308.8 311.6 C306.9 314.3 305.4 316.8 303.4 320.2 C301.4 323.6 299.5 328.4 297.0 332.0 C294.5 335.6 291.5 338.4 288.3 341.8 C285.1 345.2 281.6 348.3 277.6 352.5 C273.7 356.7 266.8 364.7 264.6 367.1 C264.1 366.1 263.1 362.8 261.5 361.0 C259.9 359.2 257.2 357.6 254.8 356.5 C252.4 355.4 248.6 354.5 247.3 354.1 C248.1 352.0 250.4 345.5 251.8 341.5 C253.2 337.5 254.2 333.8 256.0 329.9 C257.8 326.0 260.2 321.8 262.5 318.0 C264.8 314.2 266.8 312.0 270.0 307.3 C273.2 302.6 278.8 294.9 281.9 290.0 C285.0 285.1 286.2 283.0 288.5 277.7 C290.8 272.4 293.0 264.8 295.8 258.3 C298.6 251.8 301.4 246.1 305.5 238.8 C309.6 231.5 315.9 220.1 320.1 214.6 C324.4 209.1 327.7 208.4 331.0 206.0 C334.3 203.6 336.8 201.7 340.0 200.0 C343.2 198.3 346.7 197.4 350.0 196.0 C353.3 194.6 356.3 193.3 360.0 191.5 C363.7 189.7 370.0 186.1 372.0 185.0Z" fill="none" stroke="#604539" stroke-width="9" stroke-opacity="0.5" filter="url(#bl)"/>
</g>
<circle cx="349.5" cy="270" r="47" fill="url(#br)"/>
<circle cx="446.5" cy="270" r="47" fill="url(#br)"/>
<ellipse cx="318" cy="256" rx="17" ry="22" fill="url(#ar)"/>
<ellipse cx="479" cy="256" rx="17" ry="22" fill="url(#ar)"/>
<path d="M302.8 276 A47 47 0 0 0 396 276" fill="none" stroke="#8c6f63" stroke-opacity="0.3" stroke-width="1.2"/>
<path d="M399.8 276 A47 47 0 0 0 493 276" fill="none" stroke="#8c6f63" stroke-opacity="0.3" stroke-width="1.2"/>
</svg></div>
<div class="a" style="left:819px;top:80px;width:4px;height:641px;background:#f0f0f0"></div>
<div id="rp" class="a"></div>
<div class="a" style="left:823px;top:80px;width:55px;height:20px;background:#808080"></div>
<span class="a" style="left:830.5px;top:83.4px;color:#f0f0f0">Meshes</span>
<div class="tab" style="left:878px;width:44px">Bones</div>
<div class="tab" style="left:924px;width:62px">Partitions</div>
<div class="tab" style="left:988px;width:46px">Colors</div>
<div class="tab" style="left:1036px;width:44px">Lights</div>
<div id="tree" class="a"></div>
<div class="a" style="left:835px;top:108px;width:9px;height:9px;background:#e6e6e6;border:1px solid #9a9a9a"></div>
<div class="a" style="left:837px;top:112px;width:5px;height:1px;background:#2050a0"></div>
<span class="a" style="left:851.5px;top:103.8px;color:#fff">Reference Only</span>
<svg class="a" style="left:866px;top:120px" width="20" height="14" viewBox="0 0 20 14"><path d="M3 7.6 Q9.7 0.6 17 7" fill="none" stroke="#fff" stroke-width="2.2" stroke-linecap="round"/><circle cx="9.7" cy="8.7" r="3" fill="#3a3a3a" stroke="#fff" stroke-width="2"/></svg>
<div class="a" style="left:884px;top:120px;width:33px;height:18px;background:#eeeeee;border:1px solid #fafafa"></div>
<span class="a" style="left:885.5px;top:123px;color:#00e000;font-weight:bold;font-size:11px;letter-spacing:-0.4px">CBBE</span>
<div class="a" style="left:823px;top:278px;width:379px;height:2px;background:#6f6f6f"></div>
<div class="a" style="left:819px;top:280px;width:383px;height:4px;background:#f0f0f0"></div>
<div id="hdr" class="a">
<div class="cb" style="left:7px;top:8px;width:13px;height:13px"><div style="position:relative;left:0.5px;top:0.5px"><svg width="10" height="10" viewBox="0 0 10 10" style="position:absolute;left:0;top:0"><path d="M1 4.6 L4 7.5 L9.6 1.7" fill="none" stroke="#2a2a2a" stroke-width="1.3"/></svg></div></div>
<span class="a" style="left:23.5px;top:8.5px;color:#fff">De-/Select Sliders</span>
</div>
<div id="list" class="a">
<div class="row" style="top:1px">
<div class="pen"><svg width="18" height="18" viewBox="0 0 18 18" style="position:absolute;left:0;top:0"><path d="M10.3 1.6 L14.8 4.7 L13.9 5.7 L9.4 2.6Z" fill="#2e2626"/><path d="M8.8 3.9 L13.4 7 L8.3 13.9 L3.8 10.7Z" fill="#362a2a"/><path d="M3.3 11.6 L6.9 14.2 L2.6 16.6Z" fill="#2e2626"/></svg></div>
<div class="cb" style="left:27.5px;top:5.5px"><svg width="10" height="10" viewBox="0 0 10 10" style="position:absolute;left:0;top:0"><path d="M1 4.6 L4 7.5 L9.6 1.7" fill="none" stroke="#2a2a2a" stroke-width="1.3"/></svg></div>
<span class="lbl" style="left:47px">AnkleSize</span>
<div class="trk" style="left:110px;width:191px"></div>
<div class="thm" style="left:110.0px"><svg width="11" height="17" viewBox="0 0 11 17" style="display:block"><path d="M0 0 H11 V13.6 L7.6 17 H3.4 L0 13.6 Z" fill="#0078d7"/></svg></div>
<div class="val">0%</div>
</div>
<div class="row" style="top:28px">
<div class="pen"><svg width="18" height="18" viewBox="0 0 18 18" style="position:absolute;left:0;top:0"><path d="M10.3 1.6 L14.8 4.7 L13.9 5.7 L9.4 2.6Z" fill="#2e2626"/><path d="M8.8 3.9 L13.4 7 L8.3 13.9 L3.8 10.7Z" fill="#362a2a"/><path d="M3.3 11.6 L6.9 14.2 L2.6 16.6Z" fill="#2e2626"/></svg></div>
<div class="cb" style="left:27.5px;top:5.5px"><svg width="10" height="10" viewBox="0 0 10 10" style="position:absolute;left:0;top:0"><path d="M1 4.6 L4 7.5 L9.6 1.7" fill="none" stroke="#2a2a2a" stroke-width="1.3"/></svg></div>
<span class="lbl" style="left:47px">AppleCheeks</span>
<div class="trk" style="left:129px;width:172px"></div>
<div class="thm" style="left:129.0px"><svg width="11" height="17" viewBox="0 0 11 17" style="display:block"><path d="M0 0 H11 V13.6 L7.6 17 H3.4 L0 13.6 Z" fill="#0078d7"/></svg></div>
<div class="val">0%</div>
</div>
<div class="row" style="top:55px">
<div class="pen"><svg width="18" height="18" viewBox="0 0 18 18" style="position:absolute;left:0;top:0"><path d="M10.3 1.6 L14.8 4.7 L13.9 5.7 L9.4 2.6Z" fill="#2e2626"/><path d="M8.8 3.9 L13.4 7 L8.3 13.9 L3.8 10.7Z" fill="#362a2a"/><path d="M3.3 11.6 L6.9 14.2 L2.6 16.6Z" fill="#2e2626"/></svg></div>
<div class="cb" style="left:27.5px;top:5.5px"><svg width="10" height="10" viewBox="0 0 10 10" style="position:absolute;left:0;top:0"><path d="M1 4.6 L4 7.5 L9.6 1.7" fill="none" stroke="#2a2a2a" stroke-width="1.3"/></svg></div>
<span class="lbl" style="left:47px">AreolaSize</span>
<div class="trk" style="left:114px;width:187px"></div>
<div class="thm" style="left:290.0px"><svg width="11" height="17" viewBox="0 0 11 17" style="display:block"><path d="M0 0 H11 V13.6 L7.6 17 H3.4 L0 13.6 Z" fill="#0078d7"/></svg></div>
<div class="val">100%</div>
</div>
<div class="row" style="top:82px">
<div class="pen"><svg width="18" height="18" viewBox="0 0 18 18" style="position:absolute;left:0;top:0"><path d="M10.3 1.6 L14.8 4.7 L13.9 5.7 L9.4 2.6Z" fill="#2e2626"/><path d="M8.8 3.9 L13.4 7 L8.3 13.9 L3.8 10.7Z" fill="#362a2a"/><path d="M3.3 11.6 L6.9 14.2 L2.6 16.6Z" fill="#2e2626"/></svg></div>
<div class="cb" style="left:27.5px;top:5.5px"><svg width="10" height="10" viewBox="0 0 10 10" style="position:absolute;left:0;top:0"><path d="M1 4.6 L4 7.5 L9.6 1.7" fill="none" stroke="#2a2a2a" stroke-width="1.3"/></svg></div>
<span class="lbl" style="left:47px">Arms</span>
<div class="trk" style="left:88px;width:213px"></div>
<div class="thm" style="left:88.0px"><svg width="11" height="17" viewBox="0 0 11 17" style="display:block"><path d="M0 0 H11 V13.6 L7.6 17 H3.4 L0 13.6 Z" fill="#0078d7"/></svg></div>
<div class="val">0%</div>
</div>
<div class="row" style="top:109px">
<div class="pen"><svg width="18" height="18" viewBox="0 0 18 18" style="position:absolute;left:0;top:0"><path d="M10.3 1.6 L14.8 4.7 L13.9 5.7 L9.4 2.6Z" fill="#2e2626"/><path d="M8.8 3.9 L13.4 7 L8.3 13.9 L3.8 10.7Z" fill="#362a2a"/><path d="M3.3 11.6 L6.9 14.2 L2.6 16.6Z" fill="#2e2626"/></svg></div>
<div class="cb" style="left:27.5px;top:5.5px"><svg width="10" height="10" viewBox="0 0 10 10" style="position:absolute;left:0;top:0"><path d="M1 4.6 L4 7.5 L9.6 1.7" fill="none" stroke="#2a2a2a" stroke-width="1.3"/></svg></div>
<span class="lbl" style="left:47px">Back</span>
<div class="trk" style="left:85px;width:216px"></div>
<div class="thm" style="left:85.0px"><svg width="11" height="17" viewBox="0 0 11 17" style="display:block"><path d="M0 0 H11 V13.6 L7.6 17 H3.4 L0 13.6 Z" fill="#0078d7"/></svg></div>
<div class="val">0%</div>
</div>
<div class="row" style="top:136px">
<div class="pen"><svg width="18" height="18" viewBox="0 0 18 18" style="position:absolute;left:0;top:0"><path d="M10.3 1.6 L14.8 4.7 L13.9 5.7 L9.4 2.6Z" fill="#2e2626"/><path d="M8.8 3.9 L13.4 7 L8.3 13.9 L3.8 10.7Z" fill="#362a2a"/><path d="M3.3 11.6 L6.9 14.2 L2.6 16.6Z" fill="#2e2626"/></svg></div>
<div class="cb" style="left:27.5px;top:5.5px"><svg width="10" height="10" viewBox="0 0 10 10" style="position:absolute;left:0;top:0"><path d="M1 4.6 L4 7.5 L9.6 1.7" fill="none" stroke="#2a2a2a" stroke-width="1.3"/></svg></div>
<span class="lbl" style="left:47px">BackArch</span>
<div class="trk" style="left:110px;width:191px"></div>
<div class="thm" style="left:110.0px"><svg width="11" height="17" viewBox="0 0 11 17" style="display:block"><path d="M0 0 H11 V13.6 L7.6 17 H3.4 L0 13.6 Z" fill="#0078d7"/></svg></div>
<div class="val">0%</div>
</div>
<div class="row" style="top:163px">
<div class="pen"><svg width="18" height="18" viewBox="0 0 18 18" style="position:absolute;left:0;top:0"><path d="M10.3 1.6 L14.8 4.7 L13.9 5.7 L9.4 2.6Z" fill="#2e2626"/><path d="M8.8 3.9 L13.4 7 L8.3 13.9 L3.8 10.7Z" fill="#362a2a"/><path d="M3.3 11.6 L6.9 14.2 L2.6 16.6Z" fill="#2e2626"/></svg></div>
<div class="cb" style="left:27.5px;top:5.5px"><svg width="10" height="10" viewBox="0 0 10 10" style="position:absolute;left:0;top:0"><path d="M1 4.6 L4 7.5 L9.6 1.7" fill="none" stroke="#2a2a2a" stroke-width="1.3"/></svg></div>
<span class="lbl" style="left:47px">Belly</span>
<div class="trk" style="left:85px;width:216px"></div>
<div class="thm" style="left:85.0px"><svg width="11" height="17" viewBox="0 0 11 17" style="display:block"><path d="M0 0 H11 V13.6 L7.6 17 H3.4 L0 13.6 Z" fill="#0078d7"/></svg></div>
<div class="val">-50%</div>
</div>
<div class="row" style="top:190px">
<div class="pen"><svg width="18" height="18" viewBox="0 0 18 18" style="position:absolute;left:0;top:0"><path d="M10.3 1.6 L14.8 4.7 L13.9 5.7 L9.4 2.6Z" fill="#2e2626"/><path d="M8.8 3.9 L13.4 7 L8.3 13.9 L3.8 10.7Z" fill="#362a2a"/><path d="M3.3 11.6 L6.9 14.2 L2.6 16.6Z" fill="#2e2626"/></svg></div>
<div class="cb" style="left:27.5px;top:5.5px"><svg width="10" height="10" viewBox="0 0 10 10" style="position:absolute;left:0;top:0"><path d="M1 4.6 L4 7.5 L9.6 1.7" fill="none" stroke="#2a2a2a" stroke-width="1.3"/></svg></div>
<span class="lbl" style="left:47px">BigBelly</span>
<div class="trk" style="left:102px;width:199px"></div>
<div class="thm" style="left:233.6px"><svg width="11" height="17" viewBox="0 0 11 17" style="display:block"><path d="M0 0 H11 V13.6 L7.6 17 H3.4 L0 13.6 Z" fill="#0078d7"/></svg></div>
<div class="val">70%</div>
</div>
<div class="row" style="top:217px">
<div class="pen"><svg width="18" height="18" viewBox="0 0 18 18" style="position:absolute;left:0;top:0"><path d="M10.3 1.6 L14.8 4.7 L13.9 5.7 L9.4 2.6Z" fill="#2e2626"/><path d="M8.8 3.9 L13.4 7 L8.3 13.9 L3.8 10.7Z" fill="#362a2a"/><path d="M3.3 11.6 L6.9 14.2 L2.6 16.6Z" fill="#2e2626"/></svg></div>
<div class="cb" style="left:27.5px;top:5.5px"><svg width="10" height="10" viewBox="0 0 10 10" style="position:absolute;left:0;top:0"><path d="M1 4.6 L4 7.5 L9.6 1.7" fill="none" stroke="#2a2a2a" stroke-width="1.3"/></svg></div>
<span class="lbl" style="left:47px">BigButt</span>
<div class="trk" style="left:99px;width:202px"></div>
<div class="thm" style="left:99.0px"><svg width="11" height="17" viewBox="0 0 11 17" style="display:block"><path d="M0 0 H11 V13.6 L7.6 17 H3.4 L0 13.6 Z" fill="#0078d7"/></svg></div>
<div class="val">0%</div>
</div>
<div class="row" style="top:244px">
<div class="pen"><svg width="18" height="18" viewBox="0 0 18 18" style="position:absolute;left:0;top:0"><path d="M10.3 1.6 L14.8 4.7 L13.9 5.7 L9.4 2.6Z" fill="#2e2626"/><path d="M8.8 3.9 L13.4 7 L8.3 13.9 L3.8 10.7Z" fill="#362a2a"/><path d="M3.3 11.6 L6.9 14.2 L2.6 16.6Z" fill="#2e2626"/></svg></div>
<div class="cb" style="left:27.5px;top:5.5px"><svg width="10" height="10" viewBox="0 0 10 10" style="position:absolute;left:0;top:0"><path d="M1 4.6 L4 7.5 L9.6 1.7" fill="none" stroke="#2a2a2a" stroke-width="1.3"/></svg></div>
<span class="lbl" style="left:47px">BigTorso</span>
<div class="trk" style="left:107px;width:194px"></div>
<div class="thm" style="left:107.0px"><svg width="11" height="17" viewBox="0 0 11 17" style="display:block"><path d="M0 0 H11 V13.6 L7.6 17 H3.4 L0 13.6 Z" fill="#0078d7"/></svg></div>
<div class="val">0%</div>
</div>
<div class="row" style="top:271px">
<div class="pen"><svg width="18" height="18" viewBox="0 0 18 18" style="position:absolute;left:0;top:0"><path d="M10.3 1.6 L14.8 4.7 L13.9 5.7 L9.4 2.6Z" fill="#2e2626"/><path d="M8.8 3.9 L13.4 7 L8.3 13.9 L3.8 10.7Z" fill="#362a2a"/><path d="M3.3 11.6 L6.9 14.2 L2.6 16.6Z" fill="#2e2626"/></svg></div>
<div class="cb" style="left:27.5px;top:5.5px"><svg width="10" height="10" viewBox="0 0 10 10" style="position:absolute;left:0;top:0"><path d="M1 4.6 L4 7.5 L9.6 1.7" fill="none" stroke="#2a2a2a" stroke-width="1.3"/></svg></div>
<span class="lbl" style="left:47px">BreastCenter</span>
<div class="trk" style="left:127px;width:174px"></div>
<div class="thm" style="left:127.0px"><svg width="11" height="17" viewBox="0 0 11 17" style="display:block"><path d="M0 0 H11 V13.6 L7.6 17 H3.4 L0 13.6 Z" fill="#0078d7"/></svg></div>
<div class="val">0%</div>
</div>
<div class="row" style="top:298px">
<div class="pen"><svg width="18" height="18" viewBox="0 0 18 18" style="position:absolute;left:0;top:0"><path d="M10.3 1.6 L14.8 4.7 L13.9 5.7 L9.4 2.6Z" fill="#2e2626"/><path d="M8.8 3.9 L13.4 7 L8.3 13.9 L3.8 10.7Z" fill="#362a2a"/><path d="M3.3 11.6 L6.9 14.2 L2.6 16.6Z" fill="#2e2626"/></svg></div>
<div class="cb" style="left:27.5px;top:5.5px"><svg width="10" height="10" viewBox="0 0 10 10" style="position:absolute;left:0;top:0"><path d="M1 4.6 L4 7.5 L9.6 1.7" fill="none" stroke="#2a2a2a" stroke-width="1.3"/></svg></div>
<span class="lbl" style="left:47px">BreastCenterBig</span>
<div class="trk" style="left:144px;width:157px"></div>
<div class="thm" style="left:144.0px"><svg width="11" height="17" viewBox="0 0 11 17" style="display:block"><path d="M0 0 H11 V13.6 L7.6 17 H3.4 L0 13.6 Z" fill="#0078d7"/></svg></div>
<div class="val">0%</div>
</div>
<div class="row" style="top:325px">
<div class="pen"><svg width="18" height="18" viewBox="0 0 18 18" style="position:absolute;left:0;top:0"><path d="M10.3 1.6 L14.8 4.7 L13.9 5.7 L9.4 2.6Z" fill="#2e2626"/><path d="M8.8 3.9 L13.4 7 L8.3 13.9 L3.8 10.7Z" fill="#362a2a"/><path d="M3.3 11.6 L6.9 14.2 L2.6 16.6Z" fill="#2e2626"/></svg></div>
<div class="cb" style="left:27.5px;top:5.5px"><svg width="10" height="10" viewBox="0 0 10 10" style="position:absolute;left:0;top:0"><path d="M1 4.6 L4 7.5 L9.6 1.7" fill="none" stroke="#2a2a2a" stroke-width="1.3"/></svg></div>
<span class="lbl" style="left:47px">BreastCleavage</span>
<div class="trk" style="left:140px;width:161px"></div>
<div class="thm" style="left:140.0px"><svg width="11" height="17" viewBox="0 0 11 17" style="display:block"><path d="M0 0 H11 V13.6 L7.6 17 H3.4 L0 13.6 Z" fill="#0078d7"/></svg></div>
<div class="val">-50%</div>
</div>
<div class="row" style="top:352px">
<div class="pen"><svg width="18" height="18" viewBox="0 0 18 18" style="position:absolute;left:0;top:0"><path d="M10.3 1.6 L14.8 4.7 L13.9 5.7 L9.4 2.6Z" fill="#2e2626"/><path d="M8.8 3.9 L13.4 7 L8.3 13.9 L3.8 10.7Z" fill="#362a2a"/><path d="M3.3 11.6 L6.9 14.2 L2.6 16.6Z" fill="#2e2626"/></svg></div>
<div class="cb" style="left:27.5px;top:5.5px"><svg width="10" height="10" viewBox="0 0 10 10" style="position:absolute;left:0;top:0"><path d="M1 4.6 L4 7.5 L9.6 1.7" fill="none" stroke="#2a2a2a" stroke-width="1.3"/></svg></div>
<span class="lbl" style="left:47px">BreastFlatness2</span>
<div class="trk" style="left:140px;width:161px"></div>
<div class="thm" style="left:140.0px"><svg width="11" height="17" viewBox="0 0 11 17" style="display:block"><path d="M0 0 H11 V13.6 L7.6 17 H3.4 L0 13.6 Z" fill="#0078d7"/></svg></div>
<div class="val">0%</div>
</div>
<div class="row" style="top:379px">
<div class="pen"><svg width="18" height="18" viewBox="0 0 18 18" style="position:absolute;left:0;top:0"><path d="M10.3 1.6 L14.8 4.7 L13.9 5.7 L9.4 2.6Z" fill="#2e2626"/><path d="M8.8 3.9 L13.4 7 L8.3 13.9 L3.8 10.7Z" fill="#362a2a"/><path d="M3.3 11.6 L6.9 14.2 L2.6 16.6Z" fill="#2e2626"/></svg></div>
<div class="cb" style="left:27.5px;top:5.5px"><svg width="10" height="10" viewBox="0 0 10 10" style="position:absolute;left:0;top:0"><path d="M1 4.6 L4 7.5 L9.6 1.7" fill="none" stroke="#2a2a2a" stroke-width="1.3"/></svg></div>
<span class="lbl" style="left:47px">BreastFlatness</span>
<div class="trk" style="left:134px;width:167px"></div>
<div class="thm" style="left:134.0px"><svg width="11" height="17" viewBox="0 0 11 17" style="display:block"><path d="M0 0 H11 V13.6 L7.6 17 H3.4 L0 13.6 Z" fill="#0078d7"/></svg></div>
<div class="val">0%</div>
</div>
<div class="row" style="top:406px">
<div class="pen"><svg width="18" height="18" viewBox="0 0 18 18" style="position:absolute;left:0;top:0"><path d="M10.3 1.6 L14.8 4.7 L13.9 5.7 L9.4 2.6Z" fill="#2e2626"/><path d="M8.8 3.9 L13.4 7 L8.3 13.9 L3.8 10.7Z" fill="#362a2a"/><path d="M3.3 11.6 L6.9 14.2 L2.6 16.6Z" fill="#2e2626"/></svg></div>
<div class="cb" style="left:27.5px;top:5.5px"><svg width="10" height="10" viewBox="0 0 10 10" style="position:absolute;left:0;top:0"><path d="M1 4.6 L4 7.5 L9.6 1.7" fill="none" stroke="#2a2a2a" stroke-width="1.3"/></svg></div>
<span class="lbl" style="left:47px">BreastGravity</span>
<div class="trk" style="left:125px;width:176px"></div>
<div class="thm" style="left:125.0px"><svg width="11" height="17" viewBox="0 0 11 17" style="display:block"><path d="M0 0 H11 V13.6 L7.6 17 H3.4 L0 13.6 Z" fill="#0078d7"/></svg></div>
<div class="val">0%</div>
</div>
</div>
<div class="a" style="left:823px;top:721px;width:379px;height:1px;background:#d9d9d9"></div>
<div id="sb" class="a">
<div class="a" style="left:0;top:0;width:1px;height:408px;background:#fafafa"></div>
<svg class="a" style="left:4px;top:5px" width="9" height="6" viewBox="0 0 9 6"><path d="M0.7 5.3 L4.5 1.3 L8.3 5.3" fill="none" stroke="#606060" stroke-width="1.9"/></svg>
<div class="a" style="left:1px;top:17px;width:15px;height:60px;background:#cdcdcd"></div>
<svg class="a" style="left:4px;top:397px" width="9" height="6" viewBox="0 0 9 6"><path d="M0.7 0.7 L4.5 4.7 L8.3 0.7" fill="none" stroke="#606060" stroke-width="1.9"/></svg>
</div>
<div id="status" class="a">
<span class="a" style="left:1.7px;top:4.4px">Ready!</span>
<div class="a" style="left:663px;top:1px;width:1px;height:19px;background:#d3d3d3"></div>
<div class="a" style="left:1074px;top:1px;width:1px;height:19px;background:#d3d3d3"></div>
<div class="a" style="left:1198px;top:12px;width:2px;height:2px;background:#bdbdbd"></div>
<div class="a" style="left:1194.7px;top:15px;width:2px;height:2px;background:#bdbdbd"></div>
<div class="a" style="left:1198px;top:15px;width:2px;height:2px;background:#bdbdbd"></div>
<div class="a" style="left:1191.4px;top:18px;width:2px;height:2px;background:#bdbdbd"></div>
<div class="a" style="left:1194.7px;top:18px;width:2px;height:2px;background:#bdbdbd"></div>
<div class="a" style="left:1198px;top:18px;width:2px;height:2px;background:#bdbdbd"></div>
</div>
</body></html>
